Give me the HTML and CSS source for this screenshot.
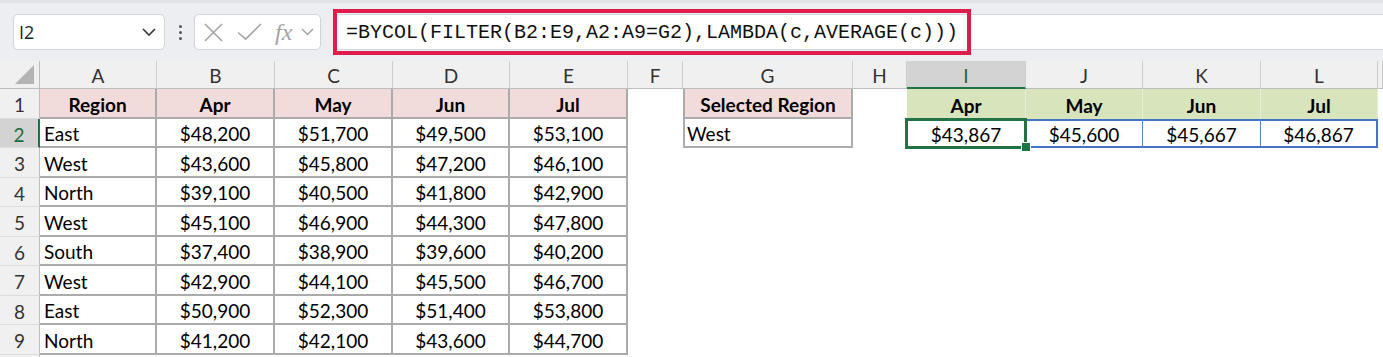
FILE: index.html
```html
<!DOCTYPE html>
<html lang="en">

<head>
    <meta charset="UTF-8">
    <meta name="viewport" content="width=device-width, initial-scale=1.0">
    <title>BYCOL FILTER</title>
    <link rel="stylesheet" href="styles.css">
</head>

<body>
    <header class="toolbar">
        <div class="namebox">
            <span>I2</span>
            <svg class="chev" width="14" height="8" viewBox="0 0 14 8"><path d="M1 1 L7 7 L13 1" fill="none" stroke="#333" stroke-width="1.6"/></svg>
        </div>
        <div class="dots"><i></i><i></i><i></i></div>
        <div class="fxbox">
            <svg class="x" width="19" height="19" viewBox="0 0 20 20"><path d="M1 1 L19 19 M19 1 L1 19" stroke="#a3a3a3" stroke-width="1.6" fill="none"/></svg>
            <svg class="ok" width="25" height="19" viewBox="0 0 26 20"><path d="M1 10 L9 17 L25 1" stroke="#a3a3a3" stroke-width="1.6" fill="none"/></svg>
            <span class="fx">fx</span>
            <svg width="13" height="8" viewBox="0 0 13 8"><path d="M1 1 L6.5 6.5 L12 1" fill="none" stroke="#a3a3a3" stroke-width="1.5"/></svg>
        </div>
        <div class="formula">
            <span class="code">=BYCOL(FILTER(B2:E9,A2:A9=G2),LAMBDA(c,AVERAGE(c)))</span>
            <div class="callout"></div>
        </div>
    </header>

    <main class="sheet">
        <div class="row head">
            <div class="corner"><i></i></div>
            <div class="hd">A</div><div class="hd">B</div><div class="hd">C</div><div class="hd">D</div>
            <div class="hd">E</div><div class="hd">F</div><div class="hd">G</div><div class="hd">H</div>
            <div class="hd on">I</div><div class="hd">J</div><div class="hd">K</div><div class="hd">L</div>
            <div class="hd"></div>
        </div>
        <div class="row r30">
            <div class="rh">1</div>
            <div class="t pink b">Region</div><div class="t pink b">Apr</div><div class="t pink b">May</div>
            <div class="t pink b">Jun</div><div class="t pink b">Jul</div>
            <div></div>
            <div class="t g pink b">Selected Region</div>
            <div></div>
            <div class="gr b">Apr</div><div class="gr b">May</div><div class="gr b">Jun</div><div class="gr b">Jul</div>
            <div></div>
        </div>
        <div class="row r29">
            <div class="rh on">2</div>
            <div class="t l">East</div><div class="t">$48,200</div><div class="t">$51,700</div>
            <div class="t">$49,500</div><div class="t">$53,100</div>
            <div></div>
            <div class="t g l">West</div>
            <div></div>
            <div class="sp sel">$43,867</div><div class="sp">$45,600</div><div class="sp">$45,667</div><div class="sp last">$46,867</div>
            <div></div>
        </div>
        <div class="row r30">
            <div class="rh">3</div>
            <div class="t l">West</div><div class="t">$43,600</div><div class="t">$45,800</div>
            <div class="t">$47,200</div><div class="t">$46,100</div>
        </div>
        <div class="row r29">
            <div class="rh">4</div>
            <div class="t l">North</div><div class="t">$39,100</div><div class="t">$40,500</div>
            <div class="t">$41,800</div><div class="t">$42,900</div>
        </div>
        <div class="row r30">
            <div class="rh">5</div>
            <div class="t l">West</div><div class="t">$45,100</div><div class="t">$46,900</div>
            <div class="t">$44,300</div><div class="t">$47,800</div>
        </div>
        <div class="row r29">
            <div class="rh">6</div>
            <div class="t l">South</div><div class="t">$37,400</div><div class="t">$38,900</div>
            <div class="t">$39,600</div><div class="t">$40,200</div>
        </div>
        <div class="row r30">
            <div class="rh">7</div>
            <div class="t l">West</div><div class="t">$42,900</div><div class="t">$44,100</div>
            <div class="t">$45,500</div><div class="t">$46,700</div>
        </div>
        <div class="row r29">
            <div class="rh">8</div>
            <div class="t l">East</div><div class="t">$50,900</div><div class="t">$52,300</div>
            <div class="t">$51,400</div><div class="t">$53,800</div>
        </div>
        <div class="row r30">
            <div class="rh">9</div>
            <div class="t l">North</div><div class="t">$41,200</div><div class="t">$42,100</div>
            <div class="t">$43,600</div><div class="t">$44,700</div>
        </div>
        <div class="row end">
            <div class="rh"></div>
        </div>
    </main>
</body>

</html>
```

FILE: styles.css
```css
* {
    padding: 0;
    margin: 0;
    box-sizing: border-box;
}

body {
    width: 1383px;
    height: 357px;
    overflow: hidden;
    background: #fff;
    font-family: "Lato", "Liberation Sans", sans-serif;
    color: #000;
}

/* formula toolbar */
.toolbar {
    display: flex;
    align-items: center;
    height: 61px;
    padding-left: 13px;
    background: #eceef1;
    border-top: 3px solid #dfe2e6;
}

.namebox {
    display: flex;
    align-items: center;
    justify-content: space-between;
    width: 152px;
    height: 36px;
    padding: 0 8px 0 5px;
    background: #fff;
    border: 1px solid #d3d5d9;
    border-radius: 5px;
    font-family: "Open Sans", "Liberation Sans", sans-serif;
    font-size: 18px;
    color: #222;
}

.dots {
    display: flex;
    flex-direction: column;
    gap: 3px;
    margin: 0 12px 0 14px;
}

.dots i {
    display: block;
    width: 3px;
    height: 3px;
    border-radius: 50%;
    background: #555;
}

.fxbox {
    display: flex;
    align-items: center;
    width: 127px;
    height: 36px;
    padding-left: 9px;
    background: #fff;
    border: 1px solid #d3d5d9;
    border-radius: 5px;
}

.fxbox .x {
    margin-right: 14px;
}

.fxbox .ok {
    margin-right: 13px;
}

.fxbox .fx {
    font-family: "Liberation Serif", serif;
    font-style: italic;
    font-size: 24px;
    line-height: 1;
    color: #a3a3a3;
    margin-right: 9px;
}

.formula {
    position: relative;
    flex: 1;
    display: flex;
    align-items: center;
    height: 36px;
    margin-left: 12px;
    padding-left: 12px;
    background: #fff;
    border: 1px solid #d3d5d9;
    border-right: none;
}

.formula .code {
    font-family: "Liberation Mono", monospace;
    font-size: 20px;
    color: #111;
}

.callout {
    position: absolute;
    left: -1px;
    top: -6px;
    width: 638px;
    height: 46px;
    border: 4px solid #df1b4b;
}

/* grid */
.row {
    display: grid;
    grid-template-columns: 40px 117px 118px 118px 117px 118px 55px 170px 54px 119px 117px 118px 117px 1fr;
}

.row > div {
    display: flex;
    align-items: center;
    justify-content: center;
    padding-top: 2px;
    font-size: 19px;
    white-space: nowrap;
}

.head {
    height: 28px;
    background: #f0f0f0;
}

.r30 {
    height: 30px;
}

.r29 {
    height: 29px;
}

.end {
    height: 2px;
}

.corner {
    position: relative;
    background: #f0f0f0;
    border-right: 1px solid #bdbdbd;
    border-bottom: 1px solid #bdbdbd;
}

.corner i {
    position: absolute;
    right: 5px;
    bottom: 4px;
    width: 19px;
    height: 19px;
    background: #b4b4b4;
    clip-path: polygon(100% 0, 100% 100%, 0 100%);
}

.hd {
    background: #f0f0f0;
    color: #333;
    border-right: 1px solid #cdcdcd;
    border-bottom: 1px solid #bdbdbd;
}

.hd.on {
    background: #d3d3d3;
    color: #1e6b40;
    border-bottom: 2px solid #217346;
}

.rh {
    background: #f0f0f0;
    color: #333;
    border-right: 1px solid #bdbdbd;
    border-bottom: 1px solid #dcdcdc;
}

.rh.on {
    background: #d3d3d3;
    color: #1e6b40;
    border-right: 2px solid #217346;
}

.t {
    border-right: 2px solid #ababab;
    border-bottom: 2px solid #ababab;
}

.t.g {
    border-left: 2px solid #ababab;
}

.row > .l {
    justify-content: flex-start;
    padding-left: 4px;
}

.row > .g.l {
    padding-left: 2px;
}

.pink {
    background: #f2dcdb;
}

.b {
    font-weight: 700;
}

.gr {
    background: #d8e4bc;
    border-right: 1px solid #e6edd6;
}

.sp {
    border-top: 2px solid #4472c4;
    border-bottom: 2px solid #4472c4;
    border-right: 1px solid #5b80c8;
}

.sp.last {
    border-right: 2px solid #4472c4;
}

.sel {
    position: relative;
}

.sel::after {
    content: "";
    position: absolute;
    left: -2px;
    top: -3px;
    right: -2px;
    bottom: -3px;
    border: 3px solid #217346;
}

.sel::before {
    content: "";
    position: absolute;
    right: -6px;
    bottom: -6px;
    width: 8px;
    height: 8px;
    background: #217346;
    border: 1px solid #fff;
    z-index: 2;
}
```
